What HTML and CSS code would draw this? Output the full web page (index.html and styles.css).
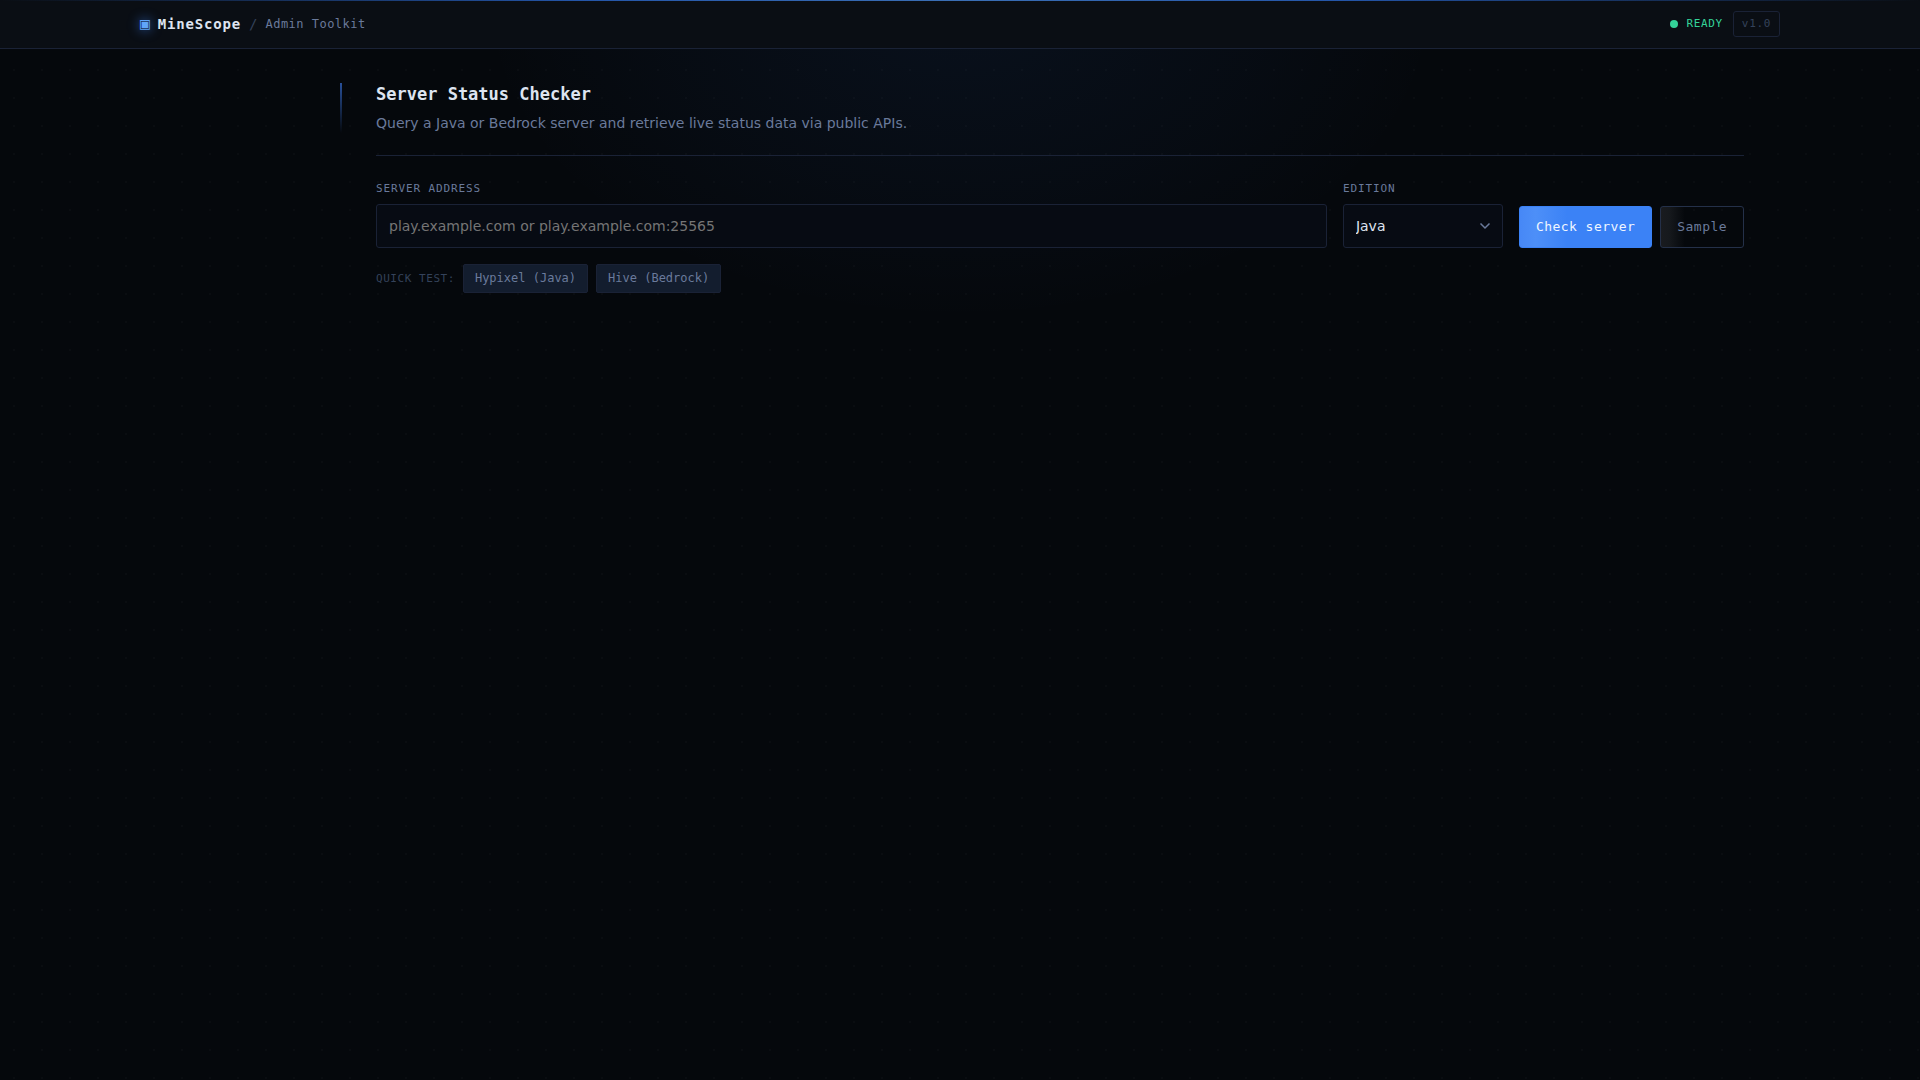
FILE: index.html
```html
<!DOCTYPE html>
<html lang="en">
<head>
    <meta charset="UTF-8">
    <title>MineScope</title>
    <meta name="viewport" content="width=device-width, initial-scale=1.0">
    <link rel="stylesheet" href="styles.css">
</head>
<body>
    <header class="topbar">
        <div class="topbar-inner">
            <div class="brand">
                <span class="brand-icon" aria-hidden="true">▣</span>
                <span class="brand-name">MineScope</span>
                <span class="brand-sep">/</span>
                <span class="brand-sub">Admin Toolkit</span>
            </div>
            <div class="topbar-meta">
                <span class="status"><span class="status-dot"></span>READY</span>
                <span class="version">v1.0</span>
            </div>
        </div>
    </header>

    <main class="layout">
        <section class="tool">
            <div class="tool-header">
                <h1>Server Status Checker</h1>
                <p>Query a Java or Bedrock server and retrieve live status data via public APIs.</p>
            </div>

            <form class="query-form" onsubmit="return false">
                <div class="field field-address">
                    <label for="address">Server address</label>
                    <input type="text" id="address" placeholder="play.example.com or play.example.com:25565" autocomplete="off">
                </div>
                <div class="field field-edition">
                    <label for="edition">Edition</label>
                    <select id="edition">
                        <option value="java">Java</option>
                        <option value="bedrock">Bedrock</option>
                    </select>
                    <svg class="chevron" width="12" height="8" viewBox="0 0 12 8" aria-hidden="true">
                        <path d="M1.500 1.500L6 6l4.500-4.500"/>
                    </svg>
                </div>
                <div class="actions">
                    <button type="submit" class="btn btn-primary">Check server</button>
                    <button type="button" class="btn btn-ghost">Sample</button>
                </div>
            </form>

            <div class="quick">
                <span class="quick-label">Quick test:</span>
                <button type="button" class="chip" data-host="mc.hypixel.net" data-edition="java">Hypixel (Java)</button>
                <button type="button" class="chip" data-host="geo.hivebedrock.network" data-edition="bedrock">Hive (Bedrock)</button>
            </div>
        </section>
    </main>

    <script>
        // Quick test buttons fill in the form
        document.querySelectorAll(".chip").forEach(chip => {
            chip.addEventListener("click", () => {
                document.getElementById("address").value = chip.dataset.host;
                document.getElementById("edition").value = chip.dataset.edition;
            });
        });
    </script>
</body>
</html>
```
FILE: styles.css
```css
:root {
    --bg: #05080c;
    --surface: #0a0e14;
    --field: #070b13;
    --raised: #131d2e;
    --border: #1a2236;
    --border-strong: #243049;
    --text: #dde4f0;
    --muted: #6a7a9b;
    --dim: #34425a;
    --accent: #3b82f6;
    --accent-light: #60a5fa;
    --green: #34d399;
    --mono: "DejaVu Sans Mono", monospace;
    --sans: "DejaVu Sans", sans-serif;
}

* {
    box-sizing: border-box;
}

/* Soft glow under the top bar, over a faint dot grid */
body {
    margin: 0;
    min-height: 100vh;
    background-color: var(--bg);
    background-image:
        radial-gradient(ellipse 480px 320px at 50% 0, rgba(59, 130, 246, 0.07), rgba(59, 130, 246, 0.03) 60%, transparent),
        radial-gradient(circle, rgba(255, 255, 255, 0.02) 1px, transparent 1px);
    background-size: 100% 100%, 28px 28px;
    background-repeat: no-repeat, repeat;
    color: var(--text);
    font-family: var(--sans);
    font-size: 14px;
    line-height: 20px;
}

/* Top bar */
.topbar {
    position: relative;
    background: var(--surface);
    border-bottom: 1px solid var(--border);
}

.topbar::before {
    content: "";
    position: absolute;
    top: 0;
    left: 0;
    right: 0;
    height: 1px;
    background: linear-gradient(90deg, transparent, #2455a8 30%, #3b6fb5 50%, #2455a8 70%, transparent);
}

.topbar-inner {
    display: flex;
    align-items: center;
    justify-content: space-between;
    max-width: 1640px;
    height: 48px;
    margin: 0 auto;
    font-family: var(--mono);
}

.brand {
    display: flex;
    align-items: center;
    gap: 8px;
}

.brand-icon {
    font-size: 16px;
    color: var(--accent-light);
    text-shadow: 0 0 12px rgba(59, 130, 246, 0.8);
}

.brand-name {
    font-size: 14px;
    font-weight: 700;
    letter-spacing: 0.06em;
}

.brand-sep {
    font-size: 14px;
    color: var(--dim);
}

.brand-sub {
    font-size: 12px;
    letter-spacing: 0.04em;
    color: var(--muted);
}

.topbar-meta {
    display: flex;
    align-items: center;
    gap: 10px;
    font-size: 11px;
    letter-spacing: 0.06em;
}

.status {
    display: flex;
    align-items: center;
    gap: 8px;
    color: var(--green);
}

.status-dot {
    width: 8px;
    height: 8px;
    border-radius: 50%;
    background: var(--green);
}

.version {
    padding: 2px 8px;
    border: 1px solid var(--border);
    border-radius: 3px;
    color: var(--dim);
}

/* Tool panel */
.layout {
    max-width: 1640px;
    margin: 0 auto;
    padding-left: 200px;
}

.tool {
    position: relative;
    padding: 34px 36px;
}

.tool::before {
    content: "";
    position: absolute;
    top: 34px;
    left: 0;
    width: 2px;
    height: 50px;
    background: linear-gradient(180deg, #28509a, transparent);
}

.tool-header {
    padding-bottom: 22px;
    border-bottom: 1px solid var(--border);
    margin-bottom: 25px;
}

h1 {
    margin: 0 0 8px;
    font-family: var(--mono);
    font-size: 17px;
    line-height: 22px;
    font-weight: 700;
}

p {
    margin: 0;
    color: var(--muted);
}

.query-form {
    display: flex;
    align-items: flex-end;
    gap: 16px;
}

.field {
    position: relative;
    display: flex;
    flex-direction: column;
    gap: 7px;
}

.field-address {
    flex: 1;
}

.field-edition {
    width: 160px;
}

label {
    font-family: var(--mono);
    font-size: 11px;
    line-height: 16px;
    letter-spacing: 0.08em;
    text-transform: uppercase;
    color: var(--muted);
}

input,
select {
    width: 100%;
    height: 44px;
    padding: 0 12px;
    background: var(--field);
    border: 1px solid var(--border);
    border-radius: 3px;
    font-family: var(--sans);
    font-size: 14px;
    color: var(--text);
    outline: none;
}

select {
    appearance: none;
}

input:focus,
select:focus {
    border-color: var(--accent);
}

.chevron {
    position: absolute;
    right: 12px;
    bottom: 18px;
    fill: none;
    stroke: var(--muted);
    stroke-width: 1.5;
    pointer-events: none;
}

.actions {
    display: flex;
    gap: 8px;
}

.btn {
    height: 42px;
    padding: 0 16px 2px;
    border: 1px solid var(--accent);
    border-radius: 3px;
    font-family: var(--mono);
    font-size: 13px;
    letter-spacing: 0.035em;
    cursor: pointer;
}

.btn-primary {
    background: linear-gradient(90deg, #4788f6, #4d8ff8 12%, var(--accent) 36%);
    color: #f0f6ff;
}

.btn-ghost {
    background: linear-gradient(90deg, #191b1f, #16191d 10%, transparent 29%);
    border-color: var(--border-strong);
    color: var(--muted);
}

.quick {
    display: flex;
    align-items: center;
    gap: 8px;
    margin-top: 16px;
}

.quick-label {
    font-family: var(--mono);
    font-size: 11px;
    letter-spacing: 0.05em;
    text-transform: uppercase;
    color: var(--dim);
}

.chip {
    height: 29px;
    padding: 0 11px 2px;
    background: var(--raised);
    border: 1px solid var(--border);
    border-radius: 2px;
    font-family: var(--mono);
    font-size: 12px;
    color: var(--muted);
    cursor: pointer;
}

.chip:hover,
.btn-ghost:hover {
    color: var(--text);
}
```
